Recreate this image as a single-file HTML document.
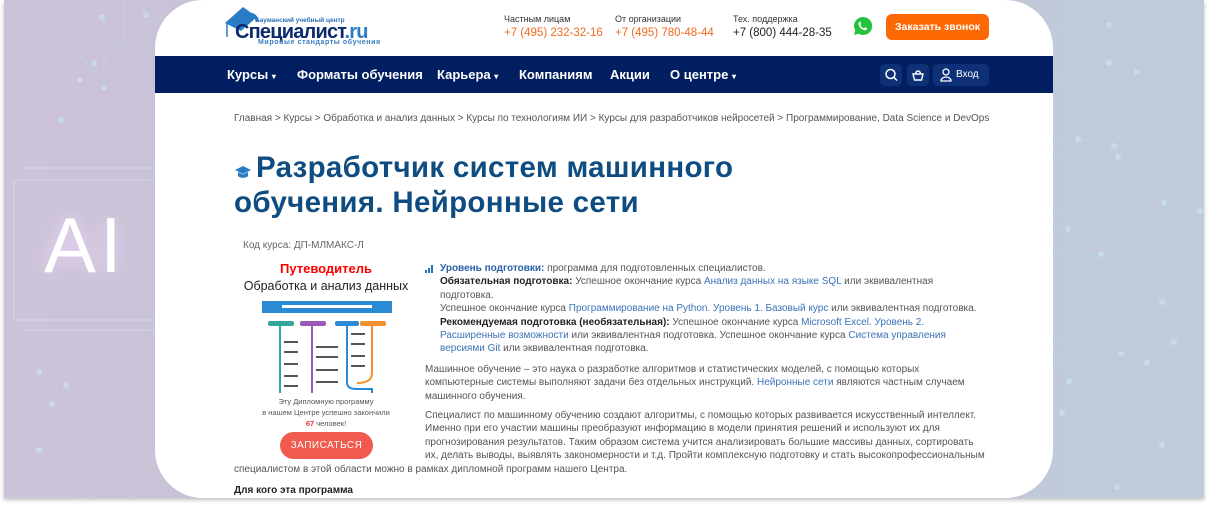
<!DOCTYPE html>
<html><head><meta charset="utf-8">
<style>
*{margin:0;padding:0;box-sizing:border-box}
body{width:1208px;height:508px;overflow:hidden;background:#fff;font-family:"Liberation Sans",sans-serif;position:relative}
.bg{position:absolute;left:4px;top:0;width:1200px;height:498px;background:linear-gradient(90deg,#cdc3d8 0%,#c9c2d6 15%,#c4c6d6 60%,#bfcbdb 100%);box-shadow:0 2px 4px rgba(0,0,0,.25)}
.ai{position:absolute;left:40px;top:200px;font-size:78px;color:#fff;letter-spacing:4px;font-weight:300;text-shadow:0 0 20px #f0d8ff}
.card{position:absolute;left:155px;top:0;width:898px;height:498px;background:#fff;border-radius:48px;overflow:hidden}
.nav{position:absolute;left:0;top:56px;width:898px;height:37px;background:#011f60}
.nav span{position:absolute;top:11px;color:#fff;font-weight:bold;font-size:13px}
.btnsq{position:absolute;top:8px;height:22px;background:#0e3077;border-radius:5px;color:#fff;font-size:10px}
.small{font-size:9px;color:#333;position:absolute}
.ph{font-size:11.5px;position:absolute;color:#f26a1d}
.t{position:absolute;font-size:10px;color:#555;line-height:13.4px;white-space:nowrap}
a{color:#3a72b8;text-decoration:none}
b{color:#222}
</style></head><body>
<div class="bg">
<svg width="1200" height="498" style="position:absolute;left:0;top:0;opacity:.6" stroke="#b8d8ec" fill="none" stroke-width="1">
<path d="M20 0v60l20 20v150M60 0v40l30 30v80M100 0v90M120 0v40l-20 20M140 0v60M90 60v100"/>
<path d="M35 350v40l20 20v90M50 360v60M62 380v120M110 380v60l-20 20v40M130 400v100"/>
<path d="M10 180h140M10 180v140h140M18 168h140M18 330h140" stroke="#d6e6ee"/>
<path d="M1050 140h60l25-25M1050 155h55l25-18M1050 215h30l30-15h75M1050 225h30l30-15h90M1050 254h50M1050 340h115M1050 356h55M1050 362h45l20 20M1058 30l30-15M1050 75l10 8 25-10 25-15"/>
<g fill="#cbe8f8" stroke="none"><circle cx="98" cy="17" r="3"/><circle cx="142" cy="15" r="3"/><circle cx="76" cy="80" r="3"/><circle cx="90" cy="63" r="3"/><circle cx="100" cy="88" r="3"/><circle cx="57" cy="120" r="3"/><circle cx="35" cy="372" r="3"/><circle cx="62" cy="385" r="3"/><circle cx="48" cy="404" r="3"/><circle cx="35" cy="450" r="3"/>
<circle cx="1105" cy="25" r="3"/><circle cx="1105" cy="63" r="3"/><circle cx="1133" cy="72" r="3"/><circle cx="1074" cy="139" r="3"/><circle cx="1110" cy="146" r="3"/><circle cx="1114" cy="157" r="3"/><circle cx="1160" cy="203" r="3"/><circle cx="1196" cy="211" r="3"/><circle cx="1064" cy="229" r="3"/><circle cx="1097" cy="254" r="3"/><circle cx="1158" cy="302" r="3"/><circle cx="1170" cy="342" r="3"/><circle cx="1117" cy="354" r="3"/><circle cx="1143" cy="363" r="3"/><circle cx="1065" cy="381" r="3"/><circle cx="1058" cy="413" r="3"/><circle cx="1158" cy="445" r="3"/><circle cx="1113" cy="487" r="3"/></g>
</svg>
<div class="ai">AI</div>
</div>
<div class="card">
<svg style="position:absolute;left:66px;top:5px" width="42" height="36"><path d="M4 18L22 2l14 10-16 14z" fill="#2a7cc7"/><path d="M20 12c8-6 16-2 16 4" stroke="#2a7cc7" stroke-width="3" fill="none"/><path d="M6 18v14" stroke="#2a7cc7" stroke-width="1.5"/></svg>
<div style="position:absolute;left:100px;top:17px;font-size:6.5px;color:#2a6fb8;font-weight:bold">Бауманский учебный центр</div>
<div style="position:absolute;left:80px;top:21px;font-size:20px;font-weight:bold;color:#0d2a6e;letter-spacing:-0.8px">Специалист<span style="color:#2a7cc7">.ru</span></div>
<div style="position:absolute;left:103px;top:39px;font-size:7px;color:#3a7cc0;letter-spacing:.6px;font-weight:bold">Мировые стандарты обучения</div>
<div class="small" style="left:349px;top:14px">Частным лицам</div><div class="ph" style="left:349px;top:27px">+7 (495) 232-32-16</div>
<div class="small" style="left:460px;top:14px">От организации</div><div class="ph" style="left:460px;top:27px">+7 (495) 780-48-44</div>
<div class="small" style="left:578px;top:14px">Тех. поддержка</div><div class="ph" style="left:578px;top:27px;color:#222">+7 (800) 444-28-35</div>
<svg style="position:absolute;left:698px;top:16px" width="20" height="20" viewBox="0 0 20 20"><path d="M10 1a9 9 0 0 0-7.8 13.4L1 19l4.7-1.2A9 9 0 1 0 10 1z" fill="#25c23c"/><path d="M7 5.5c.5 0 .8 1.8 1 2.2s-.8 1-.6 1.4a6 6 0 0 0 3.4 3.2c.4.1.9-.9 1.3-.9s2 .8 2 1.2-.5 1.6-1.8 1.6A7.5 7.5 0 0 1 5.5 7.5C5.5 6.3 6.4 5.5 7 5.5z" fill="#fff"/></svg>
<div style="position:absolute;left:731px;top:14px;width:103px;height:26px;background:#fd6a05;border-radius:6px;color:#fff;font-size:10.5px;font-weight:bold;text-align:center;line-height:26px">Заказать звонок</div>
<div class="nav">
<span style="left:72px">Курсы <small style="font-size:8px">▾</small></span><span style="left:142px">Форматы обучения</span><span style="left:282px">Карьера <small style="font-size:8px">▾</small></span><span style="left:364px">Компаниям</span><span style="left:455px">Акции</span><span style="left:515px">О центре <small style="font-size:8px">▾</small></span>
<div class="btnsq" style="left:725px;width:22px"><svg width="22" height="22"><circle cx="10.5" cy="10" r="4.5" stroke="#fff" stroke-width="1.5" fill="none"/><path d="M14 13.5l3 3" stroke="#fff" stroke-width="1.5"/></svg></div>
<div class="btnsq" style="left:752px;width:22px"><svg width="22" height="22"><path d="M6 10h10l-1.5 6h-7z M8.5 10a2.5 3 0 0 1 5 0" stroke="#fff" stroke-width="1.4" fill="none"/></svg></div>
<div class="btnsq" style="left:778px;width:56px"><svg width="14" height="22" style="position:absolute;left:6px"><circle cx="7" cy="8" r="3" stroke="#fff" stroke-width="1.3" fill="none"/><path d="M2 17a5 4 0 0 1 10 0z" stroke="#fff" stroke-width="1.3" fill="none"/></svg><span style="position:absolute;left:23px;top:5px;font-weight:normal;font-size:10px">Вход</span></div>
</div>
<div style="position:absolute;left:79px;top:113px;font-size:10px;color:#555;white-space:nowrap">Главная &gt; Курсы &gt; Обработка и анализ данных &gt; Курсы по технологиям ИИ &gt; Курсы для разработчиков нейросетей &gt; Программирование, Data Science и DevOps</div>
<svg style="position:absolute;left:79px;top:165px" width="18" height="16"><path d="M1 5l8-4 8 4-8 4z" fill="#2a7cc7"/><path d="M4 7v4c2 2.5 8 2.5 10 0V7l-5 2.5z" fill="#2a7cc7"/></svg>
<div style="position:absolute;left:79px;top:150px;font-size:29.5px;line-height:35px;color:#0f4c81;font-weight:bold;letter-spacing:.3px;width:600px"><span style="display:inline-block;width:22px"></span>Разработчик систем машинного<br>обучения. Нейронные сети</div>
<div style="position:absolute;left:88px;top:240px;font-size:10px;color:#666">Код курса: ДП-МЛМАКС-Л</div>
<div style="position:absolute;left:80px;top:261px;width:182px;text-align:center;font-size:13px;font-weight:bold;color:#f00">Путеводитель</div>
<div style="position:absolute;left:80px;top:279px;width:182px;text-align:center;font-size:12.5px;color:#222">Обработка и анализ данных</div>
<svg style="position:absolute;left:107px;top:301px" width="130" height="92">
<rect x="0" y="0" width="130" height="12" fill="#2a8ad4"/><rect x="20" y="4" width="90" height="3" fill="#fff"/>
<g stroke-width="2" fill="none"><path d="M18 22v70" stroke="#35a79a"/><path d="M50 22v70" stroke="#9a5ab8"/><path d="M85 22v60q0 6 10 6h15v4" stroke="#2a8ad4"/><path d="M110 22v50q0 10-15 10" stroke="#f5902f"/></g>
<rect x="6" y="20" width="26" height="5" rx="2" fill="#35a79a"/><rect x="38" y="20" width="26" height="5" rx="2" fill="#9a5ab8"/><rect x="73" y="20" width="24" height="5" rx="2" fill="#2a8ad4"/><rect x="98" y="20" width="26" height="5" rx="2" fill="#f5902f"/>
<g fill="#555"><rect x="22" y="40" width="14" height="2"/><rect x="22" y="50" width="14" height="2"/><rect x="22" y="62" width="14" height="2"/><rect x="22" y="74" width="14" height="2"/><rect x="22" y="84" width="14" height="2"/><rect x="54" y="45" width="22" height="2"/><rect x="54" y="55" width="22" height="2"/><rect x="54" y="68" width="22" height="2"/><rect x="54" y="80" width="22" height="2"/><rect x="89" y="32" width="14" height="2"/><rect x="89" y="42" width="14" height="2"/><rect x="89" y="54" width="14" height="2"/><rect x="89" y="64" width="14" height="2"/></g>
</svg>
<div style="position:absolute;left:80px;top:396px;width:182px;text-align:center;font-size:7.5px;color:#555;line-height:11px">Эту Дипломную программу<br>в нашем Центре успешно закончили<br><b style="color:#e33">67</b> человек!</div>
<div style="position:absolute;left:125px;top:432px;width:93px;height:27px;background:#f05a4f;border-radius:14px;color:#fff;font-size:10px;text-align:center;line-height:27px;letter-spacing:.5px">ЗАПИСАТЬСЯ</div>
<svg style="position:absolute;left:270px;top:265px" width="10" height="8"><rect x="0" y="5" width="2" height="3" fill="#2a6fb8"/><rect x="3" y="3" width="2" height="5" fill="#2a6fb8"/><rect x="6" y="0" width="2" height="8" fill="#2a6fb8"/></svg>
<div class="t" style="left:285px;top:262px"><b style="color:#2a5fa8">Уровень подготовки:</b> программа для подготовленных специалистов.<br><b>Обязательная подготовка:</b> Успешное окончание курса <a>Анализ данных на языке SQL</a> или эквивалентная<br>подготовка.<br>Успешное окончание курса <a>Программирование на Python. Уровень 1. Базовый курс</a> или эквивалентная подготовка.<br><b>Рекомендуемая подготовка (необязательная):</b> Успешное окончание курса <a>Microsoft Excel. Уровень 2.</a><br><a>Расширенные возможности</a> или эквивалентная подготовка. Успешное окончание курса <a>Система управления</a><br><a>версиями Git</a> или эквивалентная подготовка.</div>
<div class="t" style="left:270px;top:363px">Машинное обучение – это наука о разработке алгоритмов и статистических моделей, с помощью которых<br>компьютерные системы выполняют задачи без отдельных инструкций. <a>Нейронные сети</a> являются частным случаем<br>машинного обучения.</div>
<div class="t" style="left:270px;top:409px">Специалист по машинному обучению создают алгоритмы, с помощью которых развивается искусственный интеллект.<br>Именно при его участии машины преобразуют информацию в модели принятия решений и используют их для<br>прогнозирования результатов. Таким образом система учится анализировать большие массивы данных, сортировать<br>их, делать выводы, выявлять закономерности и т.д. Пройти комплексную подготовку и стать высокопрофессиональным</div>
<div class="t" style="left:79px;top:463px">специалистом в этой области можно в рамках дипломной программ нашего Центра.</div>
<div class="t" style="left:79px;top:484px;font-weight:bold;color:#222">Для кого эта программа</div>
</div>
</body></html>
